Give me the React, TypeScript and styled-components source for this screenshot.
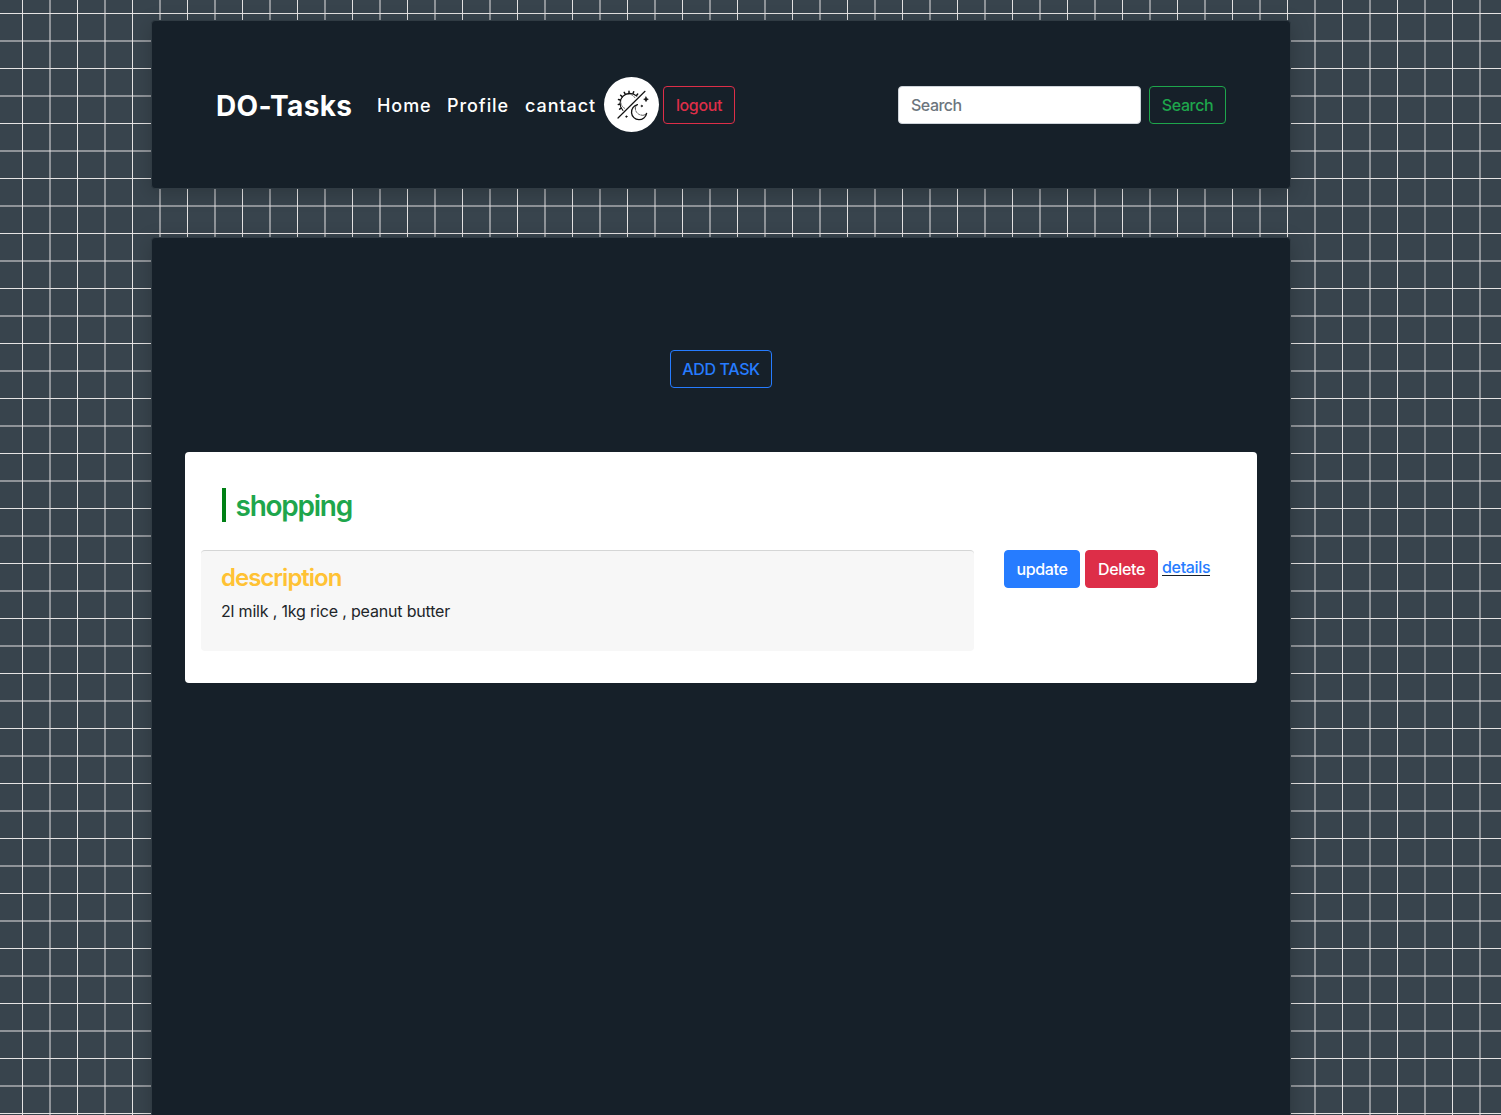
import React from "react";
import styled, { createGlobalStyle } from "styled-components";

const Global = createGlobalStyle`
  *, *::before, *::after { box-sizing: border-box; }
  body {
    margin: 0;
    overflow: hidden;
    font-family: Inter, "Liberation Sans", sans-serif;
    font-size: 16px;
    line-height: 24px;
    color: #212529;
  }
`;

const soft = "rgba(229, 226, 228, 0.5)";
const sharp = "#e5e3e3";

const Page = styled.div`
  height: 1115px;
  overflow: hidden;
  padding: 20px 210px 0 151px;
  background-color: #38444d;
  background-image:
    linear-gradient(90deg, transparent 22px, ${sharp} 22px 23px, transparent 23px 49px, ${soft} 49px 51px, transparent 51px),
    linear-gradient(180deg, transparent 13px, ${sharp} 13px 14px, transparent 14px 40px, ${soft} 40px 42px, transparent 42px);
  background-size: 55px 55px;
`;

const Panel = styled.section`
  border: 1px solid #303b43;
  border-radius: 4px;
  background: #162029;
  box-shadow: 0 4px 20px rgba(0, 0, 0, 0.2);
`;

const NavPanel = styled(Panel)`
  display: flex;
  align-items: center;
  height: 169px;
  padding: 0 64px;
`;

const Brand = styled.a`
  width: 153px;
  padding-top: 2px;
  color: #fff;
  font-size: 28px;
  font-weight: 700;
  letter-spacing: 0.4px;
  white-space: nowrap;
`;

const NavLinks = styled.nav`
  display: flex;
  align-items: center;
`;

const NavLink = styled.a<{ $width: number }>`
  width: ${(p) => p.$width}px;
  padding: 2px 0 0 8px;
  color: #fff;
  font-size: 18px;
  font-weight: 500;
  letter-spacing: 0.93px;
  white-space: nowrap;
`;

const ThemeButton = styled.button`
  width: 55px;
  height: 55px;
  margin-right: 4px;
  padding: 0;
  border: 0;
  border-radius: 50%;
  background: #fff;
  svg { display: block; }
`;

const Button = styled.button<{ $color: string; $width: number; $solid?: boolean }>`
  width: ${(p) => p.$width}px;
  height: 38px;
  padding: 0;
  border: 1px solid ${(p) => p.$color};
  border-radius: 4px;
  background: ${(p) => (p.$solid ? p.$color : "transparent")};
  color: ${(p) => (p.$solid ? "#fff" : p.$color)};
  font: 450 16px/24px Inter, "Liberation Sans", sans-serif;
  letter-spacing: -0.35px;
  white-space: nowrap;
`;

const SearchForm = styled.form`
  display: flex;
  gap: 8px;
  margin-left: auto;
`;

const SearchInput = styled.input`
  width: 243px;
  height: 38px;
  padding: 6px 12px;
  border: 1px solid #ced4da;
  border-radius: 4px;
  background: #fff;
  font: 450 16px/24px Inter, "Liberation Sans", sans-serif;
  letter-spacing: -0.5px;
  &::placeholder { color: #6c757d; opacity: 1; }
`;

const TaskPanel = styled(Panel)`
  display: flex;
  flex-direction: column;
  align-items: center;
  height: 1000px;
  margin-top: 48px;
  padding: 112px 33px 0;
`;

const TaskCard = styled.article`
  width: 1072px;
  height: 231px;
  margin-top: 64px;
  padding: 36px 16px 0;
  border-radius: 4px;
  background: #fff;
`;

const TaskTitle = styled.h2`
  height: 34px;
  margin: 0 0 28px 21px;
  padding-left: 9.5px;
  border-left: 4px solid #008015;
  color: #1ea64c;
  font-size: 28px;
  font-weight: 600;
  line-height: 37px;
  letter-spacing: -1.25px;
`;

const TaskRow = styled.div`
  display: flex;
  align-items: flex-start;
`;

const Description = styled.div`
  width: 773px;
  height: 101px;
  margin-right: 30px;
  padding: 12px 20px;
  border-top: 1px solid #d5d6d6;
  border-radius: 4px;
  background: #f7f7f7;
`;

const DescriptionTitle = styled.h3`
  margin: 0 0 7px;
  color: #ffc234;
  font-size: 24px;
  font-weight: 600;
  line-height: 29px;
  letter-spacing: -1px;
`;

const DescriptionText = styled.p`
  margin: 0;
  letter-spacing: -0.18px;
  white-space: pre;
`;

const Actions = styled.div`
  display: flex;
  align-items: flex-start;
  gap: 5px;
`;

const DetailsLink = styled.a`
  height: 21px;
  margin: 5px 0 0 -1px;
  border-bottom: 1px solid #17202a;
  color: #267cff;
  font-weight: 450;
  letter-spacing: -0.33px;
`;

const DayNightIcon = () => (
  <svg width="55" height="55" viewBox="0 0 55 55" fill="none" stroke="#111" strokeLinecap="round">
    <path d="M14 41 41 14.3" strokeWidth="1.2" />
    <path d="M18.9 33.3A9.6 9.6 0 1 1 32.8 19.2" strokeWidth="1.1" />
    <path d="M20.6 31.3A7.6 7.6 0 1 1 31 21" strokeWidth=".7" strokeDasharray=".4 1.1" />
    <path
      d="M17.2 31.1l-1.6 1M15.9 27.2l-1.6.2M16.1 23l-1.6-.5M17.9 19.4l-1.3-1.1M21 16.7l-.8-1.4M25 15.7v-1.5M29.1 16.3l.6-1.5M32.7 18.2l1-1.2"
      strokeWidth="1.5"
    />
    <path d="M33.4 27.7A7.6 7.6 0 1 0 42.6 36.4" strokeWidth="1.3" />
    <path d="M33.4 27.7C31.9 28.5 31.2 30 31.3 31.6M42.6 36.4C41.6 37.7 40.3 38.3 38.6 38.3" strokeWidth=".8" />
    <path d="M31.5 32.5C32 35.7 34.8 38.1 38.3 38.2" strokeWidth=".8" strokeDasharray=".4 1.3" />
    <path d="M42 20l.7 1.6 1.6.7-1.6.7-.7 1.6-.7-1.6-1.6-.7 1.6-.7Z" fill="#111" strokeWidth=".7" />
    <circle cx="37.7" cy="29" r=".8" fill="#111" strokeWidth=".5" />
    <circle cx="22.4" cy="39.6" r=".8" fill="#111" strokeWidth=".5" />
  </svg>
);

const blue = "#267cff";
const red = "#dd2e48";
const green = "#1ea64c";

export default function App() {
  return (
    <Page>
      <Global />
      <NavPanel>
        <Brand>DO-Tasks</Brand>
        <NavLinks>
          <NavLink $width={70}>Home</NavLink>
          <NavLink $width={78}>Profile</NavLink>
          <NavLink $width={87}>cantact</NavLink>
          <ThemeButton aria-label="Toggle theme"><DayNightIcon /></ThemeButton>
          <Button $color={red} $width={72}>logout</Button>
        </NavLinks>
        <SearchForm>
          <SearchInput placeholder="Search" />
          <Button type="button" $color={green} $width={77}>Search</Button>
        </SearchForm>
      </NavPanel>
      <TaskPanel>
        <Button $color={blue} $width={102}>ADD TASK</Button>
        <TaskCard>
          <TaskTitle>shopping</TaskTitle>
          <TaskRow>
            <Description>
              <DescriptionTitle>description</DescriptionTitle>
              <DescriptionText>2l milk , 1kg rice , peanut butter</DescriptionText>
            </Description>
            <Actions>
              <Button $solid $color={blue} $width={76}>update</Button>
              <Button $solid $color={red} $width={73}>Delete</Button>
              <DetailsLink>details</DetailsLink>
            </Actions>
          </TaskRow>
        </TaskCard>
      </TaskPanel>
    </Page>
  );
}
